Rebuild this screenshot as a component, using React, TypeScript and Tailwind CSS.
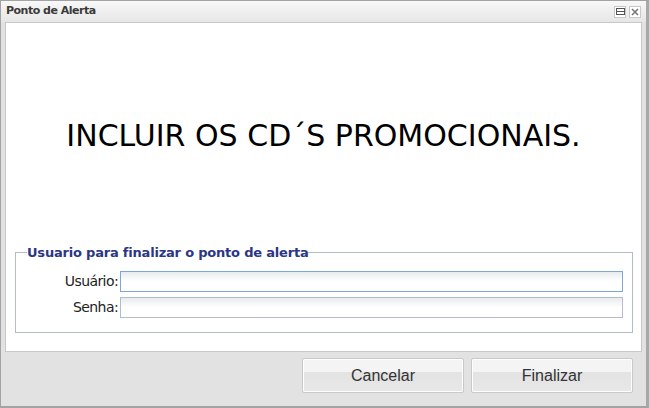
const font = { fontFamily: "Tahoma, 'DejaVu Sans', Verdana, sans-serif" };

const Field = ({ label, focused }: { label: string; focused?: boolean }) => (
  <div className="flex items-center h-[21px]">
    <label className="w-[104px] shrink-0 pr-[2px] text-right text-[14px] text-[#222] font-['DejaVu_Sans',sans-serif] tracking-[-0.6px]">
      {label}:
    </label>
    <input
      className={
        "h-[21px] flex-1 min-w-0 border bg-gradient-to-b from-[#e8ecee] via-white to-white outline-none " +
        (focused ? "border-[#7ea6d8]" : "border-[#b4bccb]")
      }
    />
  </div>
);

const WinButton = ({ children }: { children: string }) => (
  <button className="relative w-[162px] h-[35px] rounded-[2px] border border-[#c9c9c9] bg-[linear-gradient(#f4f4f4_0%,#f4f4f4_40%,#e3e3e3_41%,#e8e8e8_100%)] text-[16px] text-[#333] font-['Liberation_Sans',Arial,sans-serif] shadow-[inset_0_0_0_1px_#fdfdfd]">
    {children}
  </button>
);

export default function App() {
  return (
    <div className="w-[649px] h-[408px] bg-[#e2e2e2] border border-[#a3a3a3] border-r-[3px] border-b-[2px] border-r-[#a8a8a8] flex flex-col" style={font}>
      <div className="h-[21px] flex items-center justify-between pl-[5px] pr-[5px] bg-gradient-to-b from-[#f8f8f8] to-[#e6e6e6]">
        <span className="text-[11px] font-bold text-[#3a3a3a] font-['DejaVu_Sans',sans-serif] tracking-[-0.5px]">
          Ponto de Alerta
        </span>
        <div className="flex gap-[3px]">
          <div className="w-[12px] h-[12px] bg-white border border-[#c8c8c8] flex items-center justify-center">
            <svg width="9" height="7" viewBox="0 0 9 7">
              <rect x="0.5" y="0.5" width="8" height="6" fill="none" stroke="#555" />
              <line x1="0" y1="3.5" x2="9" y2="3.5" stroke="#555" />
            </svg>
          </div>
          <div className="w-[12px] h-[12px] bg-white border border-[#c8c8c8] flex items-center justify-center">
            <svg width="8" height="8" viewBox="0 0 8 8">
              <path d="M1 1L7 7M7 1L1 7" stroke="#777" strokeWidth="1.6" />
            </svg>
          </div>
        </div>
      </div>
      <div className="mx-[4px] h-[330px] bg-white border border-[#c8c8c8] flex flex-col">
        <div className="h-[220px] flex items-center justify-center pt-[5px]">
          <p className="text-[30px] text-black font-['DejaVu_Sans',sans-serif]">
            INCLUIR OS CD´S PROMOCIONAIS.
          </p>
        </div>
        <fieldset className="ml-[9px] w-[618px] min-w-0 h-[90px] border border-[#b4bccb] pl-0 pr-[9px]">
          <legend className="ml-[11px] text-[13px] font-bold text-[#2b3784] px-0 font-['DejaVu_Sans',sans-serif] tracking-[-0.2px]">
            Usuario para finalizar o ponto de alerta
          </legend>
          <div className="flex flex-col gap-[5px] pt-[8px]">
            <Field label="Usuário" focused />
            <Field label="Senha" />
          </div>
        </fieldset>
      </div>
      <div className="flex justify-end gap-[7px] pr-[13px] pt-[6px]">
        <WinButton>Cancelar</WinButton>
        <WinButton>Finalizar</WinButton>
      </div>
    </div>
  );
}
